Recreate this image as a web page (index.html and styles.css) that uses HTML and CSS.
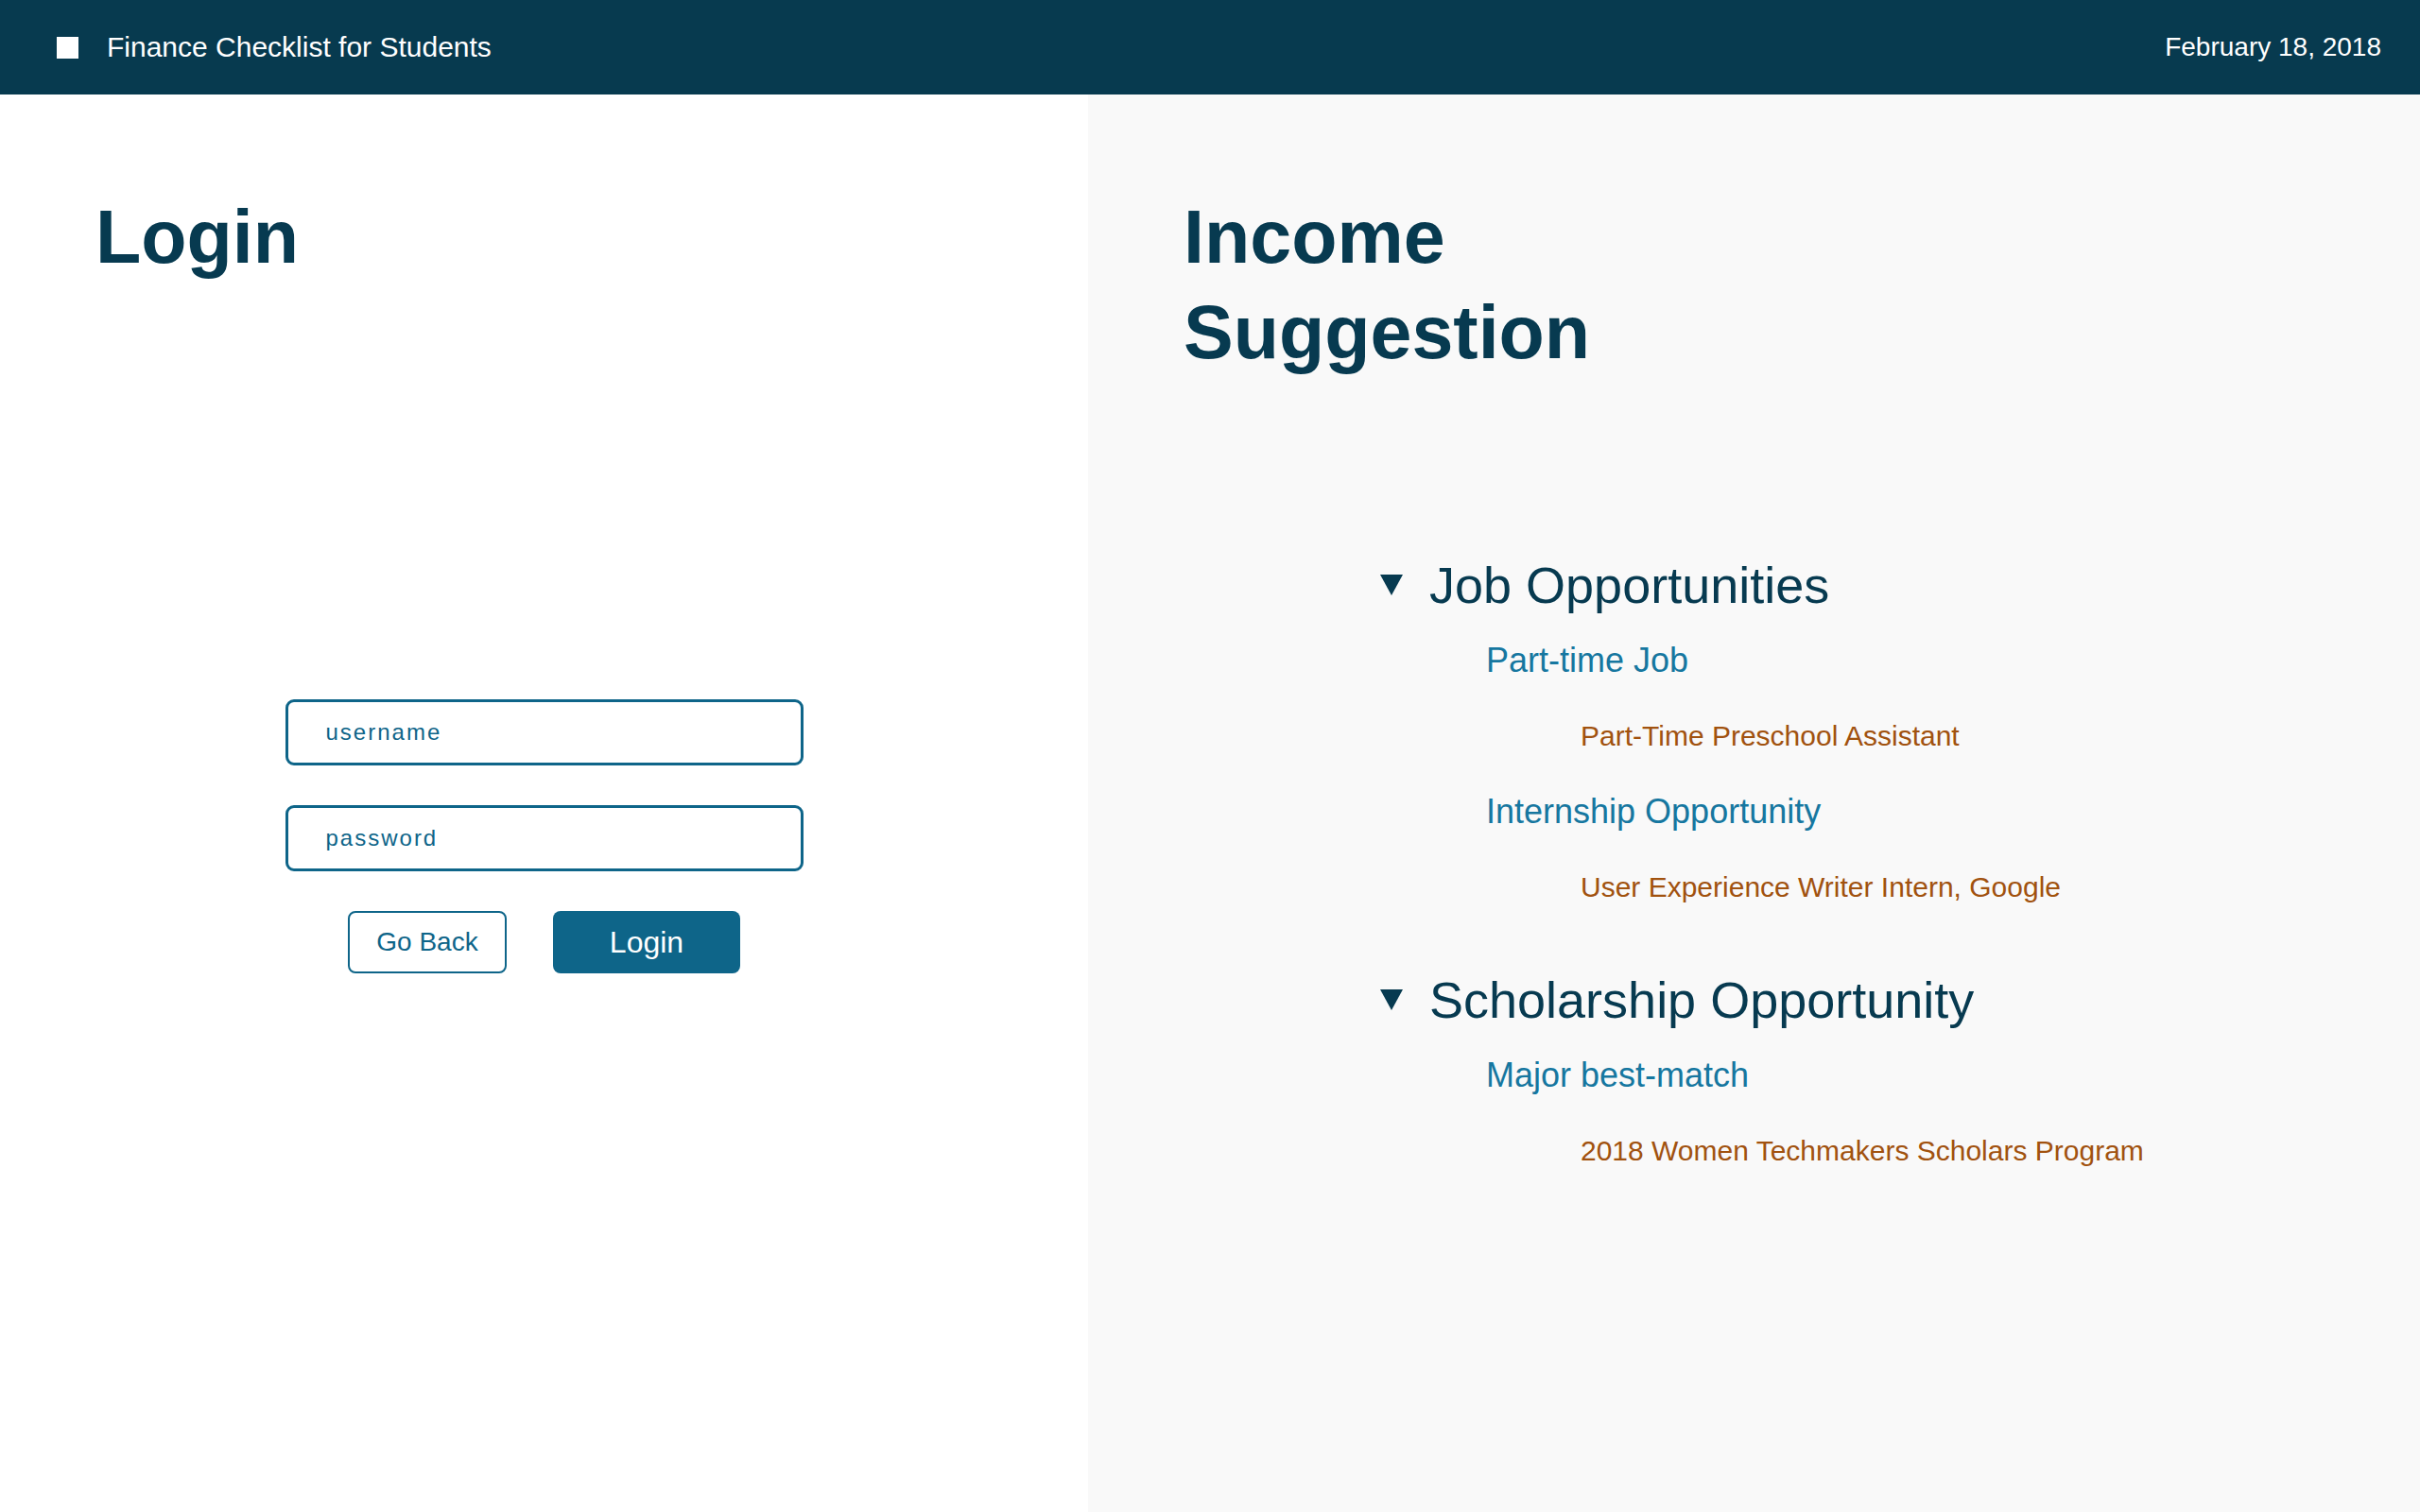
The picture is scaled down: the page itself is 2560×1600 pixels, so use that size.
FILE: index.html
```html
<!DOCTYPE html>
<html lang="en">
<head>
<meta charset="utf-8">
<title>Finance Checklist for Students</title>
<link rel="stylesheet" href="styles.css">
</head>
<body>
<header class="topbar">
  <div class="brand">
    <span class="brand-mark"></span>
    <span class="brand-title">Finance Checklist for Students</span>
  </div>
  <div class="date">February 18, 2018</div>
</header>
<main class="layout">
  <section class="panel panel-login">
    <h1 class="page-title">Login</h1>
    <form class="login-form">
      <input class="field" type="text" placeholder="username">
      <input class="field" type="password" placeholder="password">
      <div class="actions">
        <button type="button" class="btn btn-outline">Go Back</button>
        <button type="button" class="btn btn-solid">Login</button>
      </div>
    </form>
  </section>
  <section class="panel panel-income">
    <h1 class="page-title title-narrow">Income Suggestion</h1>
    <div class="suggestions">
      <div class="group">
        <div class="group-head">
          <svg class="caret" viewBox="0 0 24 22" width="24" height="22"><polygon points="0,0 24,0 12,22" fill="#073a50"/></svg>
          <span>Job Opportunities</span>
        </div>
        <div class="category">Part-time Job</div>
        <div class="item">Part-Time Preschool Assistant</div>
        <div class="category">Internship Opportunity</div>
        <div class="item">User Experience Writer Intern, Google</div>
      </div>
      <div class="group">
        <div class="group-head">
          <svg class="caret" viewBox="0 0 24 22" width="24" height="22"><polygon points="0,0 24,0 12,22" fill="#073a50"/></svg>
          <span>Scholarship Opportunity</span>
        </div>
        <div class="category">Major best-match</div>
        <div class="item">2018 Women Techmakers Scholars Program</div>
      </div>
    </div>
  </section>
</main>
</body>
</html>
```
FILE: styles.css
```css
* { box-sizing: border-box; }
html, body { margin: 0; padding: 0; }
body {
  font-family: "Liberation Sans", Arial, Helvetica, sans-serif;
  background: #ffffff;
  color: #073a50;
}
.topbar {
  height: 100px;
  background: #073a4f;
  color: #ffffff;
  display: flex;
  align-items: center;
  justify-content: space-between;
  padding: 0 41px 0 60px;
}
.brand { display: flex; align-items: center; gap: 30px; }
.brand-mark {
  width: 23px;
  height: 23px;
  background: #ffffff;
  display: block;
}
.brand-title { font-size: 30px; }
.date { font-size: 28px; }

.layout {
  display: grid;
  grid-template-columns: 1151px 1fr;
  min-height: 1500px;
}
.panel { padding-top: 100px; }
.panel-login { background: #ffffff; padding-left: 101px; }
.panel-income { background: #f9f9f9; padding-left: 101px; }

.page-title {
  margin: 0;
  font-size: 79px;
  line-height: 101px;
  font-weight: 700;
  color: #073a50;
}
.title-narrow { max-width: 600px; }

.login-form {
  margin: 439px 0 0 -101px;
  display: flex;
  flex-direction: column;
  align-items: center;
  gap: 42px;
}
.field {
  width: 548px;
  height: 70px;
  border: 3px solid #0e6589;
  border-radius: 9px;
  padding: 0 40px;
  font-family: "Liberation Sans", Arial, sans-serif;
  font-size: 24px;
  letter-spacing: 2px;
  color: #0e6589;
  background: #ffffff;
  outline: none;
}
.field::placeholder { color: #0e6589; opacity: 1; }
.actions {
  display: flex;
  gap: 49px;
}
.btn {
  height: 66px;
  border-radius: 8px;
  font-family: "Liberation Sans", Arial, sans-serif;
  cursor: pointer;
}
.btn-outline {
  width: 168px;
  background: #ffffff;
  border: 2px solid #0e6589;
  color: #0e6589;
  font-size: 28px;
}
.btn-solid {
  width: 198px;
  background: #0e6589;
  border: none;
  color: #ffffff;
  font-size: 32px;
}

.suggestions {
  margin: 177px 0 0 208px;
  display: flex;
  flex-direction: column;
  gap: 39px;
}
.group-head {
  display: flex;
  align-items: center;
  gap: 28px;
  height: 80px;
  font-size: 54px;
  color: #073a50;
}
.caret { display: block; }
.category {
  height: 80px;
  line-height: 80px;
  padding-left: 112px;
  font-size: 36px;
  color: #1677a0;
}
.item {
  height: 80px;
  line-height: 80px;
  padding-left: 212px;
  font-size: 30px;
  color: #a1520f;
}
```
